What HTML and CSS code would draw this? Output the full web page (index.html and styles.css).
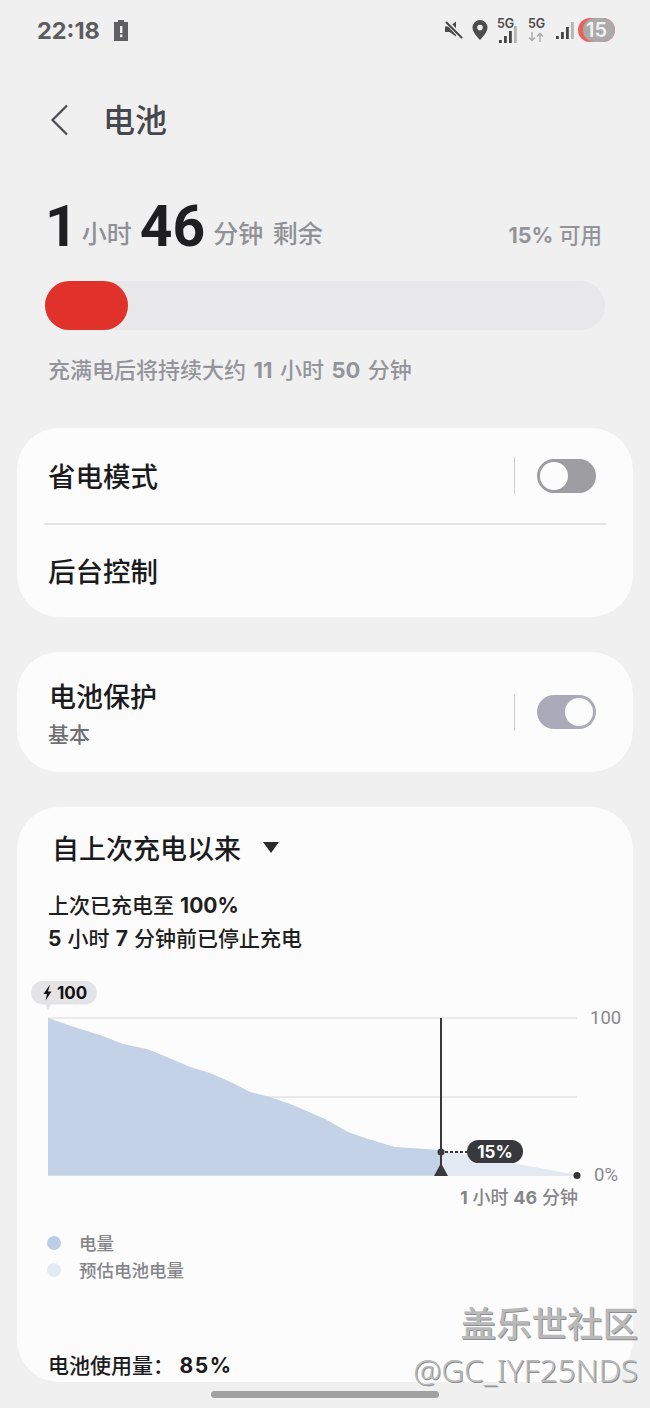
FILE: index.html
```html
<!DOCTYPE html>
<html lang="zh">
<head>
  <meta charset="UTF-8">
  <title>电池</title>
  <link rel="stylesheet" href="styles.css">
</head>
<body>
  <div class="status">
    <span class="time">22:18</span>
    <svg class="batt-alert" width="16" height="22" viewBox="0 0 16 22">
      <path fill="#5f5f61" d="M5 1h6v2h4v19H1V3h4z"/>
      <rect x="7" y="7" width="2.4" height="7" fill="#f0f0f0"/>
      <rect x="7" y="15.5" width="2.4" height="2.6" fill="#f0f0f0"/>
    </svg>
    <div class="status-right">
      <svg class="ic-mute" width="20" height="20" viewBox="0 0 20 20">
        <path fill="#4c4c4e" d="M1 6.500h4.500L12 1.500v15l-6.500-4.500H1z"/>
        <path d="M3 2l15 16" stroke="#f0f0f0" stroke-width="4.500"/>
        <path d="M2 2l16 16" stroke="#4c4c4e" stroke-width="2.200"/>
      </svg>
      <svg class="ic-pin" width="16" height="20" viewBox="0 0 16 20">
        <path fill-rule="evenodd" fill="#4c4c4e" d="M8 0a7.5 7.5 0 0 1 7.5 7.5C15.500 12 11 16.500 8 20 5 16.500.5 12 .5 7.500A7.500 7.500 0 0 1 8 0zm0 4.800a2.800 2.800 0 1 0 0 5.600 2.800 2.800 0 0 0 0-5.600z"/>
      </svg>
      <div class="net net-a">
        <span class="net-label">5G</span>
        <svg width="24" height="22" viewBox="0 0 24 22">
          <rect x="2" y="18" width="2.800" height="3" fill="#444"/>
          <rect x="7" y="14" width="2.800" height="7" fill="#444"/>
          <rect x="12" y="9" width="2.800" height="12" fill="#444"/>
          <rect x="17" y="4" width="2.800" height="17" fill="#b5b5b5"/>
        </svg>
      </div>
      <div class="net net-b">
        <span class="net-label">5G</span>
        <svg width="16" height="10" viewBox="0 0 16 10">
          <path d="M4 0v8M1 5.500l3 3 3-3" stroke="#a6a6a6" stroke-width="1.300" fill="none"/>
          <path d="M12 10V2M9 4.500l3-3 3 3" stroke="#a6a6a6" stroke-width="1.300" fill="none"/>
        </svg>
      </div>
      <svg class="ic-signal" width="20" height="20" viewBox="0 0 20 20">
        <rect x="1" y="16" width="2.800" height="3" fill="#444"/>
        <rect x="6" y="12" width="2.800" height="7" fill="#444"/>
        <rect x="11" y="7" width="2.800" height="12" fill="#444"/>
        <rect x="16" y="2" width="2.800" height="17" fill="#b5b5b5"/>
      </svg>
      <div class="batt-pill"><span class="batt-body"></span><span class="batt-num">15</span></div>
    </div>
  </div>

  <div class="header">
    <svg class="back" width="20" height="32" viewBox="0 0 20 32">
      <path d="M17 1.500L2.500 16 17 30.500" fill="none" stroke="#4a4c52" stroke-width="2.200"/>
    </svg>
    <h1 class="title">电池</h1>
  </div>

  <div class="summary">
    <div class="remain">
      <b class="big">1</b><span class="unit unit-h">小时</span><b class="big">46</b><span class="unit unit-m">分钟 剩余</span>
    </div>
    <div class="avail"><b>15%</b> 可用</div>
  </div>

  <div class="bar"><div class="bar-fill"></div></div>
  <p class="full-note">充满电后将持续大约 <b>11</b> 小时 <b>50</b> 分钟</p>

  <div class="card card-saver">
    <div class="row row-saver">
      <span class="row-title">省电模式</span>
      <span class="vline"></span>
      <span class="toggle"></span>
    </div>
    <div class="row-sep"></div>
    <div class="row row-bg"><span class="row-title">后台控制</span></div>
  </div>

  <div class="card card-protect">
    <div class="protect-text">
      <div class="row-title">电池保护</div>
      <div class="row-sub">基本</div>
    </div>
    <span class="vline"></span>
    <span class="toggle toggle-on"></span>
  </div>

  <div class="card card-usage">
    <div class="since">
      <span class="since-title">自上次充电以来</span>
      <span class="caret"></span>
    </div>
    <p class="charged">上次已充电至 <b>100%</b><br><b>5</b> 小时 <b>7</b> 分钟前已停止充电</p>

    <svg class="chart" width="616" height="240" viewBox="17 975 616 240">
      <!-- grid -->
      <path d="M48 1018H577M48 1097H577" stroke="#e4e4e4" stroke-width="1.500" fill="none"/>
      <path d="M48 1175.500H577" stroke="#e8e8e8" stroke-width="1" fill="none"/>
      <!-- level so far, then the estimate -->
      <path fill="#e3e9f2" d="M441 1150L480 1157 577 1175H441z"/>
      <path fill="#c3d2e6" d="M48 1018L80 1029 100 1035 123 1044 147 1049 167 1057 190 1067 210 1073 233 1083 250 1092 270 1097 293 1105 325 1119 348 1132 368 1139 395 1147 441 1150V1175.500H48z"/>
      <!-- start bubble -->
      <path fill="#e4e4e6" d="M43 1000h10l-5 10z"/>
      <rect x="31" y="981" width="66" height="23.500" rx="11.750" fill="#e4e4e6"/>
      <path fill="#111" d="M50 984.500L43.500 994h3.500l-1.500 6.500 6-9H48z"/>
      <text class="c-100" x="57" y="998.500">100</text>
      <!-- now marker -->
      <path d="M441 1018V1170" stroke="#38393d" stroke-width="2" fill="none"/>
      <circle cx="441" cy="1152" r="3.500" fill="#38393d"/>
      <path d="M445 1152H467" stroke="#38393d" stroke-width="2" stroke-dasharray="3 2" fill="none"/>
      <path fill="#38393d" d="M441 1163l7 13h-14z"/>
      <rect x="467" y="1140" width="56" height="23" rx="11.500" fill="#38393d"/>
      <text class="c-now" x="495" y="1157.500" text-anchor="middle">15%</text>
      <circle cx="577" cy="1175.500" r="3.500" fill="#333"/>
      <!-- axis labels -->
      <text class="c-axis" x="590" y="1023.500">100</text>
      <text class="c-axis" x="594" y="1181">0%</text>
      <text class="c-left" x="578" y="1204" text-anchor="end"><tspan font-weight="700">1</tspan> 小时 <tspan font-weight="700">46</tspan> 分钟</text>
    </svg>

    <ul class="legend">
      <li><span class="dot dot-now"></span>电量</li>
      <li><span class="dot dot-est"></span>预估电池电量</li>
    </ul>

    <p class="used">电池使用量： <b>85%</b></p>
  </div>

  <div class="home-bar"></div>

  <div class="mark">
    <div class="mark-name">盖乐世社区</div>
    <div class="mark-user">@GC_IYF25NDS</div>
  </div>
</body>
</html>
```

FILE: styles.css
```css
html, body {
    margin: 0;
    padding: 0;
}
body {
    position: relative;
    width: 650px;
    height: 1408px;
    overflow: hidden;
    background: #f0f0f1;
    color: #1b1b1d;
    font-family: Inter, "Noto Sans CJK SC", sans-serif;
}
p, ul, h1 {
    margin: 0;
    padding: 0;
}

/* status bar */
.status {
    display: flex;
    align-items: center;
    height: 60px;
    padding: 0 35px 0 37px;
}
.time {
    font-size: 23.500px;
    font-weight: 700;
    color: #5c5c5e;
}
.batt-alert {
    margin-left: 13px;
}
.status-right {
    display: flex;
    align-items: center;
    margin-left: auto;
}
.ic-pin {
    margin-left: 8px;
}
.net {
    position: relative;
    height: 26px;
}
.net-a {
    width: 24px;
    margin-left: 9px;
}
.net-a svg {
    position: absolute;
    left: 0;
    top: 5px;
}
.net-b {
    width: 18px;
    margin-left: 7px;
}
.net-b svg {
    position: absolute;
    left: 0;
    top: 15px;
}
.net-label {
    position: absolute;
    left: 0;
    top: 0;
    font-size: 12.500px;
    line-height: 14px;
    font-weight: 600;
    color: #4a4a4a;
}
.ic-signal {
    margin-left: 9px;
}
.batt-pill {
    position: relative;
    width: 37px;
    height: 24px;
    margin-left: 3px;
    border-radius: 12px;
    overflow: hidden;
    background: #e8625e;
}
.batt-body {
    position: absolute;
    left: 5px;
    right: 0;
    top: 0;
    bottom: 0;
    border-radius: 12px;
    background: #aaaaaa;
}
.batt-num {
    position: relative;
    display: block;
    text-align: center;
    font-size: 20px;
    line-height: 24px;
    font-weight: 600;
    color: #f2f2f2;
}

/* title row */
.header {
    display: flex;
    align-items: center;
    height: 60px;
    margin-top: 30px;
    padding-left: 50px;
}
.title {
    margin: 1px 0 0 33px;
    font-size: 32px;
    line-height: 60px;
    font-weight: 500;
    color: #45474d;
}

/* remaining time */
.summary {
    display: flex;
    align-items: baseline;
    justify-content: space-between;
    height: 70px;
    margin-top: 42px;
    padding: 0 48px 0 45px;
}
.big {
    font-family: Roboto, sans-serif;
    font-size: 57px;
    line-height: 70px;
    font-weight: 700;
    vertical-align: -3px;
    color: #1f1f21;
}
.unit {
    font-size: 25px;
    font-weight: 500;
    color: #909197;
}
.unit-h {
    margin: 0 8px 0 4px;
}
.unit-m {
    margin-left: 8px;
    word-spacing: 3px;
}
.avail {
    font-size: 21.500px;
    font-weight: 500;
    color: #93949a;
}
.avail b {
    font-weight: 700;
}

.bar {
    height: 49px;
    margin: 19px 45px 0;
    border-radius: 25px;
    background: #e8e8ea;
}
.bar-fill {
    width: 83px;
    height: 49px;
    border-radius: 25px;
    background: #e0312a;
}
.full-note {
    margin: 24px 0 0 48px;
    font-size: 22px;
    line-height: 32px;
    font-weight: 500;
    word-spacing: 1.600px;
    color: #94959b;
}
.full-note b {
    font-weight: 700;
}

/* cards */
.card {
    margin: 0 17px;
    border-radius: 42px;
    background: #fcfcfc;
}
.card-saver {
    height: 189px;
    margin-top: 42px;
}
.row {
    display: flex;
    align-items: center;
    padding: 0 37px 0 31px;
}
.row-saver {
    height: 95px;
}
.row-bg {
    height: 93px;
}
.row-title {
    position: relative;
    top: 1px;
    font-size: 27.500px;
    line-height: 40px;
    font-weight: 500;
    color: #1b1b1d;
}
.row-sep {
    height: 1.500px;
    margin: 0 27px;
    background: #e3e3e4;
}
.vline {
    width: 1px;
    height: 37px;
    margin-left: auto;
    background: #cfcfcf;
}
.toggle {
    position: relative;
    width: 59px;
    height: 34px;
    margin-left: 22px;
    border-radius: 17px;
    background: #9d9da2;
}
.toggle::after {
    content: "";
    position: absolute;
    left: 3px;
    top: 3px;
    width: 28px;
    height: 28px;
    border-radius: 50%;
    background: #fcfcfc;
}
.toggle-on {
    background: #a9abb8;
}
.toggle-on::after {
    left: 28px;
}

.card-protect {
    display: flex;
    align-items: center;
    height: 120px;
    margin-top: 35px;
    padding: 0 37px 0 31px;
}
.protect-text {
    margin-top: 3px;
}
.protect-text .row-title {
    top: 0;
    margin: 0 0 0 1px;
    font-size: 27px;
}
.row-sub {
    margin-top: 2px;
    font-size: 21px;
    line-height: 30px;
    font-weight: 500;
    color: #6f7075;
}

/* usage card */
.card-usage {
    height: 575px;
    margin-top: 35px;
}
.since {
    display: flex;
    align-items: center;
    padding: 23px 0 0 35px;
}
.since-title {
    font-size: 27px;
    line-height: 40px;
    font-weight: 500;
}
.caret {
    width: 0;
    height: 0;
    margin-left: 22px;
    margin-bottom: 6px;
    border-left: 8px solid transparent;
    border-right: 8px solid transparent;
    border-top: 11px solid #2a2a2c;
}
.charged {
    margin: 19px 0 0 31px;
    font-size: 21px;
    line-height: 33px;
    font-weight: 500;
    word-spacing: 0.500px;
    color: #1f1f21;
}
.charged b {
    font-weight: 700;
}
.chart {
    display: block;
    margin-top: 20px;
}
.c-100 {
    font-size: 17px;
    font-weight: 700;
    fill: #111;
}
.c-now {
    font-size: 17px;
    font-weight: 700;
    fill: #fff;
}
.c-axis {
    font-family: Roboto, sans-serif;
    font-size: 18.500px;
    fill: #88888c;
}
.c-left {
    font-size: 18px;
    font-weight: 500;
    fill: #85858a;
}
.legend {
    list-style: none;
    margin: 14px 0 0 30px;
}
.legend li {
    display: flex;
    align-items: center;
    height: 27px;
    font-size: 17.500px;
    font-weight: 500;
    color: #85868a;
}
.dot {
    width: 14px;
    height: 14px;
    margin-right: 18px;
    border-radius: 50%;
}
.dot-now {
    background: #bccde6;
}
.dot-est {
    background: #e3eaf3;
}
.used {
    margin: 67px 0 0 31px;
    font-size: 21px;
    line-height: 32px;
    font-weight: 500;
}
.used b {
    font-weight: 700;
    letter-spacing: 1.500px;
}

.home-bar {
    width: 228px;
    height: 7px;
    margin: 9px auto 0;
    border-radius: 4px;
    background: #a1a1a1;
}

/* watermark over the page corner */
.mark {
    position: absolute;
    right: 12px;
    top: 1303px;
    text-align: right;
    color: #b9b9b9;
    text-shadow: 1px 1px 0 #8f8f8f;
}
.mark-name {
    font-size: 35.500px;
    line-height: 44px;
    font-weight: 500;
}
.mark-user {
    margin-top: 1px;
    font-family: "Noto Sans", sans-serif;
    font-size: 31.500px;
    line-height: 44px;
    font-weight: 300;
}
```
